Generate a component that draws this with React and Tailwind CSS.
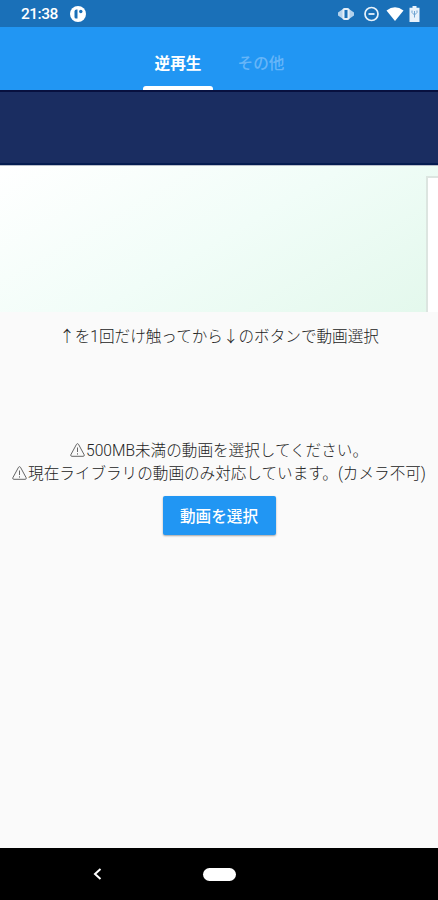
import { useState } from "react";

const StatusBar = () => (
    <div className="flex h-[27px] shrink-0 items-center bg-[#1a70b8] pl-[21px] pr-[18px] text-white">
        <span className="w-[49px] pt-[3px] text-[15.5px] font-medium leading-none tracking-[-0.5px]">21:38</span>
        <svg className="h-4 w-4" viewBox="0 0 16 16">
            <circle cx="8" cy="8" r="8" fill="#fff" />
            <path d="M4.500 5.500Q4.500 3.500 6.500 3.500H7.500V12.500H6Q4.500 12.500 4.500 11z" fill="#1a70b8" />
            <circle cx="10.800" cy="5.500" r="1.700" fill="#1a70b8" />
        </svg>
        <div className="ml-auto flex items-center">
            {/* Vibrate */}
            <svg className="mr-[10px] h-4 w-4" viewBox="0 0 16 16">
                <path d="M5 3 0 6.500v3L5 13zM11 3 16 6.500v3L11 13z" fill="#b4d2ec" />
                <rect x="4.500" y="2" width="7" height="12" rx="2" fill="#e3eef8" />
                <rect x="6.500" y="4" width="3" height="8" fill="#1a70b8" />
            </svg>
            {/* Do not disturb */}
            <svg className="mr-[7px] h-4 w-[15px]" viewBox="0 0 15 16" fill="none" stroke="#e8f2fb">
                <circle cx="7.500" cy="8" r="6.500" strokeWidth="1.700" />
                <path d="M4.500 8h6" strokeWidth="1.800" />
            </svg>
            {/* Wifi */}
            <svg className="mr-[5px] h-4 w-[18px]" viewBox="0 0 18 16">
                <path d="M0.500 4.500Q9-2 17.500 4.500L9 15z" fill="#fff" />
            </svg>
            {/* Battery */}
            <svg className="h-4 w-[11px]" viewBox="0 0 11 16">
                <path d="M3.500 0h4v1.800H10.500V16H0.500V1.800h3z" fill="#e8f2fb" />
                <path d="M3 4.500v2L5.500 9 8 6.500v-2M5.500 5v6.500" stroke="#6fa5d3" strokeWidth="1" fill="none" />
            </svg>
        </div>
    </div>
);

const Tab = ({ label, active, onClick }) => (
    <button
        type="button"
        onClick={onClick}
        className={`flex h-full flex-col items-center justify-end text-[15.6px] leading-[22px] ${active ? "font-bold text-white" : "font-medium text-[#66b5f8]"}`}
    >
        <span className="mb-[11px] pl-[1px]">{label}</span>
        <span className={`h-[4px] w-[70px] rounded-t-[3px] ${active ? "bg-white" : "bg-transparent"}`} />
    </button>
);

const WarningIcon = () => (
    <svg className="mr-[1px] inline-block h-[14px] w-[15px] align-[-1px]" viewBox="0 0 15 14" fill="none" stroke="#555" strokeWidth="0.900">
        <path d="M6.500 1.300Q7.500 0 8.500 1.300L14.200 11.800Q14.500 13.300 13.300 13.300H1.700Q.5 13.300.8 11.800z" strokeLinejoin="round" />
        <path d="M7.500 4.500v4.500M7.500 10.300v1.300" />
    </svg>
);

const tabs = ["逆再生", "その他"];

export default function App() {
    const [tab, setTab] = useState(0);

    return (
        <div className="flex h-[900px] w-[438px] flex-col overflow-hidden bg-[#fafafa] font-[Roboto,'Noto_Sans_CJK_JP',sans-serif]">
            <StatusBar />
            <div className="flex h-[63px] shrink-0 justify-center gap-[13px] bg-[#2196f3]">
                {tabs.map((label, i) => (
                    <Tab key={label} label={label} active={tab === i} onClick={() => setTab(i)} />
                ))}
            </div>

            {/* Ad banner */}
            <div className="h-[75px] shrink-0 border-y-2 border-t-[#07103f] border-b-[#051c50] bg-[#1a2d61]" />
            <div className="flex h-[147px] shrink-0 justify-end border-t border-[#b9bfcb] bg-linear-[150deg] from-white via-[#f1fdf8] to-[#e3f8ec] pt-[10px]">
                <div className="w-[12px] border-l-2 border-t-2 border-[#dce5e0] bg-white" />
            </div>

            <main className="flex flex-1 flex-col items-center whitespace-nowrap text-[15.6px] font-light leading-[23px] text-[#222]">
                <p className="mt-[14px]">↑を1回だけ触ってから↓のボタンで動画選択</p>
                <p className="mt-[91px]"><WarningIcon />500MB未満の動画を選択してください。</p>
                <p><WarningIcon />現在ライブラリの動画のみ対応しています。(カメラ不可)</p>
                <button
                    type="button"
                    className="mt-[10px] h-[39px] w-[113px] rounded-[2px] bg-[#2196f3] pt-[3px] text-[15.6px] font-medium text-white shadow-[0_1px_2px_rgba(0,0,0,0.35)]"
                >
                    動画を選択
                </button>
            </main>

            <nav className="flex h-[52px] shrink-0 items-center bg-black pl-[93px]">
                <svg className="h-3 w-[9px]" viewBox="0 0 9 12" fill="none" stroke="#fff" strokeWidth="2">
                    <path d="M7.500 1 2 6l5.500 5" />
                </svg>
                <div className="ml-[101px] h-[13px] w-[33px] rounded-full bg-white" />
            </nav>
        </div>
    );
}
